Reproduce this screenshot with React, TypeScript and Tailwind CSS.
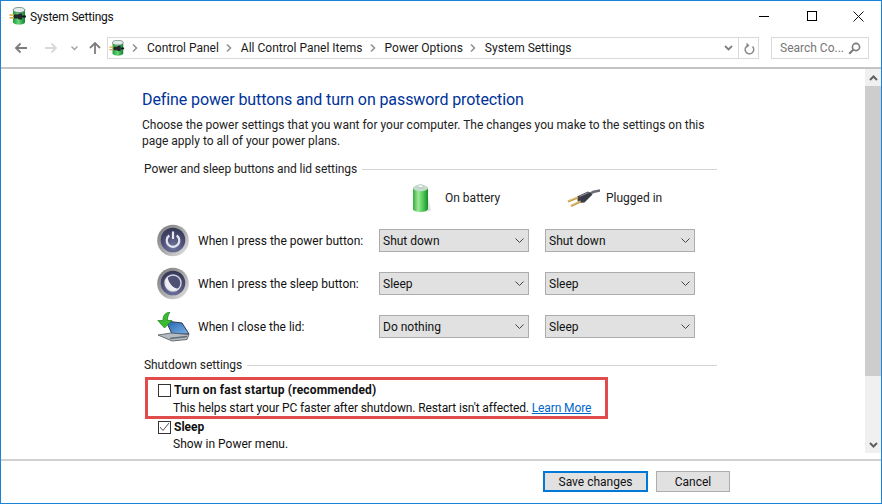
const font = { fontFamily: 'Roboto, sans-serif' };

function PlugBadge({ id, size = 18 }: { id: string; size?: number }) {
  return (
    <svg width={size} height={size} viewBox="0 0 18 18">
      <defs>
        <linearGradient id={id} x1="0" x2="1" y1="0" y2="0">
          <stop offset="0" stopColor="#1c9a3a" />
          <stop offset="0.45" stopColor="#63d676" />
          <stop offset="1" stopColor="#138030" />
        </linearGradient>
      </defs>
      <path d="M4 3v12c0 3.500 12 3.500 12 0V3z" fill={`url(#${id})`} />
      <ellipse cx="10" cy="3" rx="6" ry="2.600" fill="#e4ebe8" stroke="#54706a" strokeWidth="0.700" />
      <path d="M5 7.500h3.500l2-1h2.500v6h-2.500l-2-1H5z" fill="#23262c" />
      <path d="M13 9.500h4" stroke="#15171b" strokeWidth="2" />
      <path d="M.500 8h4.500M.500 10.800h4.500" stroke="#d9a93a" strokeWidth="1.400" />
    </svg>
  );
}

function RoundButton({ kind, id }: { kind: "power" | "sleep"; id: string }) {
  return (
    <svg width="33" height="33" viewBox="0 0 33 33">
      <defs>
        <linearGradient id={id + "r"} x1="0" x2="1" y1="0" y2="1">
          <stop offset="0" stopColor="#77777a" />
          <stop offset="0.55" stopColor="#adadb0" />
          <stop offset="1" stopColor="#e6e6e6" />
        </linearGradient>
        <radialGradient id={id + "c"} cx="0.5" cy="0.8" r="0.85">
          <stop offset="0" stopColor="#7478a2" />
          <stop offset="0.6" stopColor="#484a70" />
          <stop offset="1" stopColor="#30324c" />
        </radialGradient>
      </defs>
      <circle cx="16" cy="16.500" r="15.800" fill={`url(#${id}r)`} />
      <circle cx="16" cy="16" r="12.300" fill={`url(#${id}c)`} />
      {kind === "power" ? (
        <g fill="none" stroke="#e4e6f0" strokeWidth="2.200">
          <path d="M12.300 11.500a6.300 6.300 0 1 0 7.400 0" />
          <path d="M16 7.500v7.500" />
        </g>
      ) : (
        <g>
          <circle cx="16" cy="16" r="8" fill="#4e5074" stroke="#d4d6e2" strokeWidth="1.400" />
          <path d="M10.500 10.200a8 8 0 0 0 11.300 11.400C16 21.500 12 16.500 10.500 10.200z" fill="#eef0f6" />
        </g>
      )}
    </svg>
  );
}

function LidIcon() {
  return (
    <svg width="33" height="30" viewBox="0 0 33 30">
      <defs>
        <linearGradient id="scr" x1="0" x2="1" y1="0" y2="1">
          <stop offset="0" stopColor="#1f5fae" />
          <stop offset="1" stopColor="#7fb4e8" />
        </linearGradient>
      </defs>
      <path d="M9 9l16 2 7 11-17 0z" fill="url(#scr)" stroke="#2f3a55" strokeWidth="1" />
      <path d="M1 23l13-2 18 1.500-2 5-15 1.500z" fill="#b4bcc2" stroke="#4d545b" strokeWidth="0.800" />
      <path d="M13 26.500l17-2" stroke="#5f6a72" strokeWidth="1.600" />
      <path d="M13 0C7 1 6 4.500 6 8.500H.800L7.500 16l7.500-7.500H10.500c0-3.500.8-6 2.500-8.500z" fill="#39bd2e" stroke="#1c7f1c" strokeWidth="0.700" />
    </svg>
  );
}

function Battery() {
  return (
    <svg width="20" height="30" viewBox="0 0 20 30">
      <defs>
        <linearGradient id="bat" x1="0" x2="1" y1="0" y2="0">
          <stop offset="0" stopColor="#34ad44" />
          <stop offset="0.35" stopColor="#9fe896" />
          <stop offset="0.75" stopColor="#3cc04a" />
          <stop offset="1" stopColor="#1d8a2c" />
        </linearGradient>
      </defs>
      <path d="M16 14l3 13-3 2z" fill="#e2e2e2" />
      <path d="M1 5v21c0 4 15 4 15 0V5z" fill="url(#bat)" />
      <ellipse cx="8.500" cy="5" rx="7.500" ry="3.200" fill="#c4dccb" />
      <ellipse cx="8.500" cy="3.200" rx="3" ry="1.600" fill="#f4f7f5" stroke="#8fa09a" strokeWidth="0.500" />
    </svg>
  );
}

function Plug() {
  return (
    <svg width="34" height="20" viewBox="0 0 34 20">
      <path d="M22 6c3-2 6-3 11-3.500" stroke="#6a6d76" strokeWidth="2.400" fill="none" />
      <path d="M10 8.500L21 3.500l4.500 3-8 8-6.500 .500z" fill="#3a3d46" />
      <path d="M12.500 8.500l9-4" stroke="#8b8e98" strokeWidth="1.200" />
      <path d="M1 13.500l10-4M4 18l9.500-4.500" stroke="#c49a45" strokeWidth="2.200" />
      <path d="M1 13l10-4M4 17.500l9.500-4.500" stroke="#f0dca0" strokeWidth="0.600" />
    </svg>
  );
}

function Select({ value }: { value: string }) {
  return (
    <div className="flex h-[23px] w-[150px] items-center justify-between border border-[#acacac] bg-[#e1e1e1] pl-[3px] pr-[4px] text-[12px] text-[#111]">
      <span>{value}</span>
      <svg width="9" height="5" viewBox="0 0 9 5">
        <path d="M.500.500l4 4 4-4" fill="none" stroke="#444" strokeWidth="1" />
      </svg>
    </div>
  );
}

function SectionTitle({ text }: { text: string }) {
  return (
    <div className="ml-[2px] flex w-[573px] items-center gap-[5px] text-[12px] leading-[16px] tracking-[-0.08px] text-[#222]">
      <span className="whitespace-nowrap">{text}</span>
      <div className="h-px flex-1 bg-[#d4d4d4]" />
    </div>
  );
}

function Crumb() {
  return (
    <svg width="6" height="8" viewBox="0 0 6 8" className="ml-[7px] mr-[9px] shrink-0">
      <path d="M1 .5L4.500 4 1 7.500" fill="none" stroke="#8f8f8f" strokeWidth="1.500" />
    </svg>
  );
}

const rows = [
  { label: "When I press the power button:", a: "Shut down", b: "Shut down", icon: <RoundButton kind="power" id="pw" /> },
  { label: "When I press the sleep button:", a: "Sleep", b: "Sleep", icon: <RoundButton kind="sleep" id="sl" /> },
  { label: "When I close the lid:", a: "Do nothing", b: "Sleep", icon: <LidIcon /> },
];

export default function App() {
  return (
    <div className="relative flex h-[504px] w-[882px] flex-col overflow-hidden border border-[#1883d7] bg-white" style={font}>
      {/* title bar */}
      <div className="flex h-[30px] shrink-0 items-center pl-[8px]">
        <PlugBadge id="t1" />
        <span className="ml-[3px] mt-[1px] text-[12px] tracking-[-0.2px] text-[#111]">System Settings</span>
        <div className="ml-auto flex items-center">
          <div className="mr-[38px] h-px w-[10px] bg-black" />
          <div className="mr-[36px] h-[10px] w-[10px] border border-black" />
          <svg width="11" height="11" viewBox="0 0 11 11" className="mr-[17px]">
            <path d="M.500.500l10 10M10.500.500l-10 10" stroke="#111" strokeWidth="1" />
          </svg>
        </div>
      </div>

      {/* address toolbar */}
      <div className="flex h-[38px] shrink-0 items-start border-b-2 border-[#c4c4c4] pt-[6px]">
        <div className="flex h-[22px] w-[106px] items-center">
          <svg width="14" height="12" viewBox="0 0 14 12" className="ml-[13px]">
            <path d="M13 6H2M6.500 1.500L2 6l4.500 4.500" fill="none" stroke="#7d7d7d" strokeWidth="1.800" />
          </svg>
          <svg width="14" height="12" viewBox="0 0 14 12" className="ml-[16px]">
            <path d="M1 6h11M7.500 1.500L12 6l-4.500 4.500" fill="none" stroke="#d8d8d8" strokeWidth="1.800" />
          </svg>
          <svg width="7" height="5" viewBox="0 0 7 5" className="ml-[13px]">
            <path d="M.500.500L3.500 3.500 6.500.500" fill="none" stroke="#a0a0a0" strokeWidth="1.300" />
          </svg>
          <svg width="14" height="14" viewBox="0 0 14 14" className="ml-[10px]">
            <path d="M7 13V2M2 7l5-5 5 5" fill="none" stroke="#7d7d7d" strokeWidth="1.800" />
          </svg>
        </div>
        <div className="flex h-[22px] w-[652px] items-center border border-[#d9d9d9] pl-[1px] text-[12px] text-[#1a1a1a]">
          <PlugBadge id="t2" size={16} />
          <Crumb />
          <span className="whitespace-nowrap">Control Panel</span>
          <Crumb />
          <span className="whitespace-nowrap">All Control Panel Items</span>
          <Crumb />
          <span className="whitespace-nowrap">Power Options</span>
          <Crumb />
          <span className="whitespace-nowrap">System Settings</span>
          <svg width="9" height="6" viewBox="0 0 9 6" className="ml-auto mr-[5px]">
            <path d="M1 1l3.500 3.500L8 1" fill="none" stroke="#808080" strokeWidth="1.800" />
          </svg>
          <div className="flex h-full w-[20px] items-center justify-center border-l border-[#d9d9d9]">
            <svg width="12" height="13" viewBox="0 0 12 13">
              <path d="M9.500 4.500A4.300 4.300 0 1 1 5 3.500" fill="none" stroke="#8a8a8a" strokeWidth="1.500" />
              <path d="M3.500 .5l3 3-3 2.500z" fill="#8a8a8a" />
            </svg>
          </div>
        </div>
        <div className="ml-[12px] flex h-[22px] w-[98px] items-center justify-between border border-[#d9d9d9] pl-[8px] pr-[7px] text-[12px] text-[#777]">
          <span className="whitespace-nowrap">Search Co...</span>
          <svg width="13" height="13" viewBox="0 0 13 13">
            <circle cx="8" cy="5" r="3.600" fill="none" stroke="#7a7a7a" strokeWidth="1.600" />
            <path d="M5.300 7.700L1.200 11.800" stroke="#7a7a7a" strokeWidth="2" />
          </svg>
        </div>
      </div>

      {/* content with scrollbar */}
      <div className="flex h-[392px] shrink-0 border-b-2 border-[#d0d0d0]">
        <div className="flex-1 pl-[141px] pt-[21px]">
          <h1 className="text-[16px] font-normal leading-[20px] tracking-[-0.1px] text-[#003399]">Define power buttons and turn on password protection</h1>
          <p className="mt-[7px] w-[580px] text-[12px] leading-[16px] text-[#222]">
            Choose the power settings that you want for your computer. The changes you make to the settings on this page apply to all of your power plans.
          </p>
          <div className="mt-[12px]">
            <SectionTitle text="Power and sleep buttons and lid settings" />
          </div>

          <div className="mt-[5px] flex h-[32px] items-center pl-[270px] text-[12px] text-[#222]">
            <Battery />
            <span className="ml-[13px] w-[122px]">On battery</span>
            <Plug />
            <span className="ml-[5px]">Plugged in</span>
          </div>

          <div className="mt-[10px] flex flex-col gap-[10px]">
            {rows.map((r) => (
              <div key={r.label} className="flex h-[33px] items-center pl-[15px]">
                <div className="flex w-[41px] justify-start">{r.icon}</div>
                <span className="w-[181px] whitespace-nowrap text-[12px] text-[#111]">{r.label}</span>
                <Select value={r.a} />
                <div className="ml-[16px]">
                  <Select value={r.b} />
                </div>
              </div>
            ))}
          </div>

          <div className="mt-[14px]">
            <SectionTitle text="Shutdown settings" />
          </div>
          <div className="mt-[9px] pl-[16px] text-[12px] leading-[16px] text-[#111]">
            <div className="flex items-center gap-[3px]">
              <div className="h-[13px] w-[13px] border border-[#333]" />
              <span className="font-bold tracking-[0.18px]">Turn on fast startup (recommended)</span>
            </div>
            <div className="mt-[2px] pl-[15px] tracking-[-0.12px]">
              This helps start your PC faster after shutdown. Restart isn't affected.{" "}
              <span className="text-[#0066cc] underline">Learn More</span>
            </div>
            <div className="mt-[3px] flex items-center gap-[3px]">
              <div className="flex h-[13px] w-[13px] items-center justify-center border border-[#333]">
                <svg width="11" height="10" viewBox="0 0 11 10">
                  <path d="M1 5l3 3.500L10 1" fill="none" stroke="#555" strokeWidth="1" />
                </svg>
              </div>
              <span className="font-bold">Sleep</span>
            </div>
            <div className="mt-[1px] pl-[15px]">Show in Power menu.</div>
          </div>
        </div>

        {/* scrollbar */}
        <div className="flex h-[384px] w-[16px] shrink-0 flex-col bg-[#f0f0f0]">
          <div className="flex h-[17px] shrink-0 items-center justify-center">
            <svg width="9" height="6" viewBox="0 0 9 6">
              <path d="M1 5l3.500-3.500L8 5" fill="none" stroke="#606060" strokeWidth="2" />
            </svg>
          </div>
          <div className="h-[290px] bg-[#cdcdcd]" />
          <div className="mt-auto flex h-[17px] shrink-0 items-center justify-center">
            <svg width="9" height="6" viewBox="0 0 9 6">
              <path d="M1 1l3.500 3.500L8 1" fill="none" stroke="#606060" strokeWidth="2" />
            </svg>
          </div>
        </div>
      </div>

      {/* footer */}
      <div className="flex flex-1 items-start pl-[542px] pt-[10px] text-[12px] text-[#111]">
        <button className="flex h-[21px] w-[105px] items-center justify-center border-2 border-[#0078d7] bg-[#e1e1e1]">Save changes</button>
        <button className="ml-[8px] flex h-[21px] w-[74px] items-center justify-center border border-[#adadad] bg-[#e1e1e1]">Cancel</button>
      </div>

      {/* annotation over the fast startup option */}
      <div className="absolute left-[144px] top-[376px] h-[42px] w-[463px] border-[3px] border-[#e04b4b]" />
    </div>
  );
}
